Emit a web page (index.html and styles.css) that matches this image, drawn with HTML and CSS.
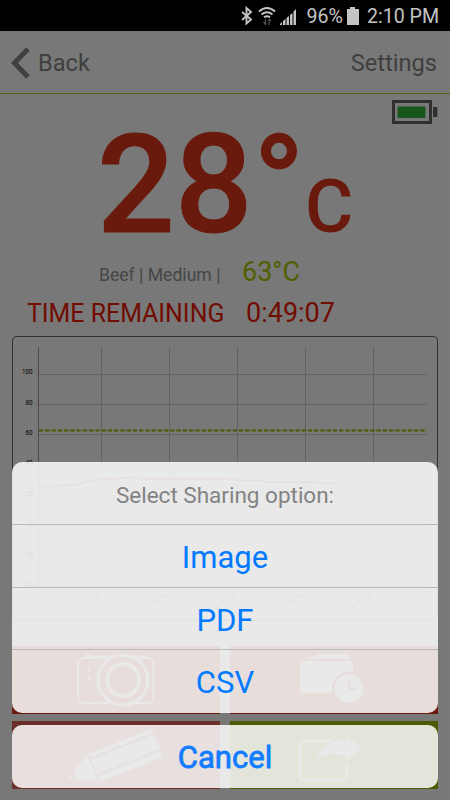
FILE: index.html
```html
<!DOCTYPE html>
<html lang="en">
<head>
  <meta charset="UTF-8" />
  <meta name="viewport" content="width=device-width, initial-scale=1" />
  <title>Thermometer</title>
  <link rel="stylesheet" href="styles.css">
</head>
<body>
  <div class="screen">
    <div class="statusbar">
      <svg class="status-icons" width="60" height="20" viewBox="0 0 60 20">
        <path d="M3 6l9 7.500-4.500 4V2l4.500 4L3 14" fill="none" stroke="#c4c4c4" stroke-width="1.900" />
        <g fill="none" stroke="#c4c4c4" stroke-width="1.900">
          <path d="M20 5.500Q28-1.500 36 5.500" />
          <path d="M22.500 8.500Q28 4 33.500 8.500" />
          <path d="M25 11.300Q28 9 31 11.300" />
        </g>
        <path d="M26.500 13v6M24.500 16l2 2.200M30 19v-6M32 15l-2-2.200" fill="none" stroke="#555" stroke-width="1.200" />
        <path d="M41 19v-1l2-2v3zM44 19v-4l2.500-2v6zM47.500 19v-7l2.500-2v9zM51 19V9l2.500-2v12zM54.500 19V5.500L57 3v16z" fill="#c4c4c4" />
      </svg>
      <span class="percent">96%</span>
      <svg class="status-battery" width="12" height="18" viewBox="0 0 12 18">
        <path d="M0 2h3V0h5v2h4v16H0z" fill="#c4c4c4" />
      </svg>
      <span class="clock">2:10 PM</span>
    </div>

    <div class="header">
      <svg width="20" height="32" viewBox="0 0 20 32">
        <path d="M17 2L3.500 16 17 30" fill="none" stroke="#404040" stroke-width="5" />
      </svg>
      <span class="back">Back</span>
      <span class="settings">Settings</span>
    </div>

    <div class="battery">
      <svg width="46" height="24" viewBox="0 0 46 24">
        <rect x="1.500" y="1.500" width="37" height="21" fill="none" stroke="#303030" stroke-width="3" />
        <rect x="5.500" y="6.500" width="28" height="11.500" fill="#18561c" />
        <rect x="41" y="7" width="4.300" height="10" fill="#303030" />
      </svg>
    </div>

    <div class="temp"><span class="degrees">28°</span><span class="unit">C</span></div>
    <div class="meat"><span class="name">Beef | Medium |</span><span class="target">63°C</span></div>
    <div class="remaining"><span class="label">TIME REMAINING</span><span class="time">0:49:07</span></div>

    <div class="chart">
      <svg width="426" height="285" viewBox="12 336 426 285">
        <path d="M36.500 374.500H427M36.500 404.500H427M36.500 434.500H427M36.500 465.500H427M36.500 495.500H427M36.500 525.500H427M36.500 556.500H427M36.500 586.500H427M101.500 347V588M169.500 347V588M237.500 347V588M305.500 347V588M373.500 347V588" stroke="#626262" fill="none" />
        <path d="M38.500 347V587" stroke="#4c4c4c" />
        <path d="M39 430.500H427" stroke="#4b5a00" stroke-width="2" stroke-dasharray="4.400 1.850" />
        <path d="M39 486.500H57L64 485H77L87 481.500 102 479H116L123 477.500H135L142 479H230L240 480.500H260L267 482H313L325 483.500H336" fill="none" stroke="#761a10" stroke-width="1.300" />
        <g class="y-labels">
          <text x="32.500" y="374">100</text>
          <text x="32.500" y="404.500">80</text>
          <text x="32.500" y="435">60</text>
          <text x="32.500" y="465">40</text>
          <text x="32.500" y="495.500">20</text>
          <text x="32.500" y="526">0</text>
          <text x="32.500" y="556.500">-20</text>
          <text x="32.500" y="587">-40</text>
        </g>
        <g class="x-labels">
          <text transform="translate(100.500 596) rotate(-30)">2:09 PM</text>
          <text transform="translate(169 596) rotate(-30)">2:09 PM</text>
          <text transform="translate(237 596) rotate(-30)">2:10 PM</text>
          <text transform="translate(305 596) rotate(-30)">2:10 PM</text>
          <text transform="translate(373 596) rotate(-30)">2:10 PM</text>
        </g>
      </svg>
    </div>

    <div class="tiles">
      <div class="tile red">
        <svg width="208" height="68" viewBox="12 646 208 68">
          <g fill="none" stroke="#787878" stroke-width="2">
            <rect x="78" y="658" width="75.500" height="45" rx="5" />
            <circle cx="123" cy="680" r="25" fill="#6a1a0c" stroke-width="3" />
            <circle cx="123" cy="680" r="16" stroke-width="4" />
          </g>
          <path d="M85 657v-2.500h8v2.500zM95 657v-1.500h50l2 1.500z" fill="#787878" />
          <circle cx="88.500" cy="669.500" r="1.800" fill="#787878" />
          <circle cx="88.500" cy="678" r="1.800" fill="#787878" />
        </svg>
      </div>
      <div class="tile red">
        <svg width="208" height="68" viewBox="230 646 208 68">
          <path d="M305 659q1-2 4-2h6q2-3 5-3h28q2 0 2 4v1zM300 661h53v32h-53z" fill="#787878" />
          <circle cx="349" cy="689" r="17" fill="#6a1a0c" />
          <circle cx="349" cy="688.500" r="14.300" fill="#787878" />
          <path d="M349.500 680v9h8" fill="none" stroke="#6a1a0c" stroke-width="2.200" />
        </svg>
      </div>
      <div class="tile brown">
        <svg width="208" height="68" viewBox="12 721 208 68">
          <path d="M88 754L152 729l11.500 28L100 781.500 75.500 778.500 73.500 771zM68 778l4-3 1.500 3.500z" fill="#787878" />
          <path d="M87.500 753l11.500 28.500M90 759l64-25.500M97 775.500l64-25.500" fill="none" stroke="#6d3028" stroke-width="2" />
        </svg>
      </div>
      <div class="tile green">
        <svg width="208" height="68" viewBox="230 721 208 68">
          <path d="M332 741H304q-4 0-4 4v31q0 4 4 4h39q4 0 4-4V763" fill="none" stroke="#787878" stroke-width="2.500" />
          <path d="M316 760Q321 740 346 740v-4l16 12-16 13v-5Q327 751 316 760z" fill="#787878" />
        </svg>
      </div>
    </div>
  </div>

  <!-- sharing action sheet -->
  <div class="sheet">
    <div class="options">
      <div class="title">Select Sharing option:</div>
      <div class="option">Image</div>
      <div class="option">PDF</div>
      <div class="option">CSV</div>
    </div>
    <div class="cancel">Cancel</div>
  </div>
</body>
</html>
```

FILE: styles.css
```css
* { box-sizing: border-box; }
body { margin: 0; width: 450px; height: 800px; position: relative; overflow: hidden; background: #787878; font-family: Roboto, sans-serif; }
svg { display: block; }
.screen { display: flex; flex-direction: column; height: 800px; }

.statusbar { display: flex; height: 31px; padding: 5px 11px 0 0; justify-content: flex-end; background: #000; color: #c4c4c4; font-size: 19.6px; line-height: 24px; }
.status-icons { margin: 1px 8px 0 0; }
.percent { margin-right: 4px; }
.status-battery { margin: 2px 8px 0 0; }

.header { display: flex; height: 63px; padding: 2px 13px 0 11px; align-items: center; border-bottom: 1px solid #59640f; color: #3f3f3f; font-size: 23.6px; }
.back { margin-left: 7px; }
.settings { margin-left: auto; }

.battery { display: flex; justify-content: flex-end; height: 30px; padding: 6px 12px 0 0; }

.temp { display: flex; align-items: baseline; height: 134px; padding-left: 97px; color: #6a1a0c; font-weight: 500; line-height: 122px; }
.degrees { width: 208px; font-size: 137px; -webkit-text-stroke: 1px #6a1a0c; }
.unit { font-size: 74px; }

.meat { display: flex; align-items: baseline; height: 37px; padding-left: 99px; line-height: 28px; }
.name { width: 143px; color: #464646; font-size: 17.6px; }
.target { color: #4f6000; font-size: 27px; }

.remaining { display: flex; align-items: baseline; height: 41px; padding-left: 27px; line-height: 36px; color: #700c02; }
.label { width: 219px; font-size: 24.9px; }
.time { font-size: 27px; }

.chart { width: 426px; height: 285px; margin-left: 12px; border-radius: 5px; box-shadow: inset 0 0 0 1px #303030; }
.y-labels { font-size: 6.3px; text-anchor: end; fill: #000; }
.x-labels { font-size: 6.5px; text-anchor: end; fill: #404040; }

.tiles { display: grid; grid-template-columns: 208px 208px; gap: 7px 10px; margin: 25px 12px 0; }
.tile { height: 68px; }
.red { background: #6a1a0c; }
.brown { background: #6d3028; }
.green { background: #4b5a00; }

.sheet { position: absolute; left: 12px; top: 462px; width: 426px; text-align: center; }
.options, .cancel { border-radius: 10px; background: rgba(247, 247, 247, 0.885); }
.options { height: 251px; margin-bottom: 12px; overflow: hidden; }
.title { height: 62px; line-height: 66px; font-size: 22.5px; color: #838383; }
.option { height: 62.5px; border-top: 1px solid #b8b8b8; line-height: 66px; font-size: 31px; color: #007aff; }
.cancel { height: 63px; line-height: 65px; font-size: 31px; color: #127cff; -webkit-text-stroke: 0.8px #127cff; }
```
